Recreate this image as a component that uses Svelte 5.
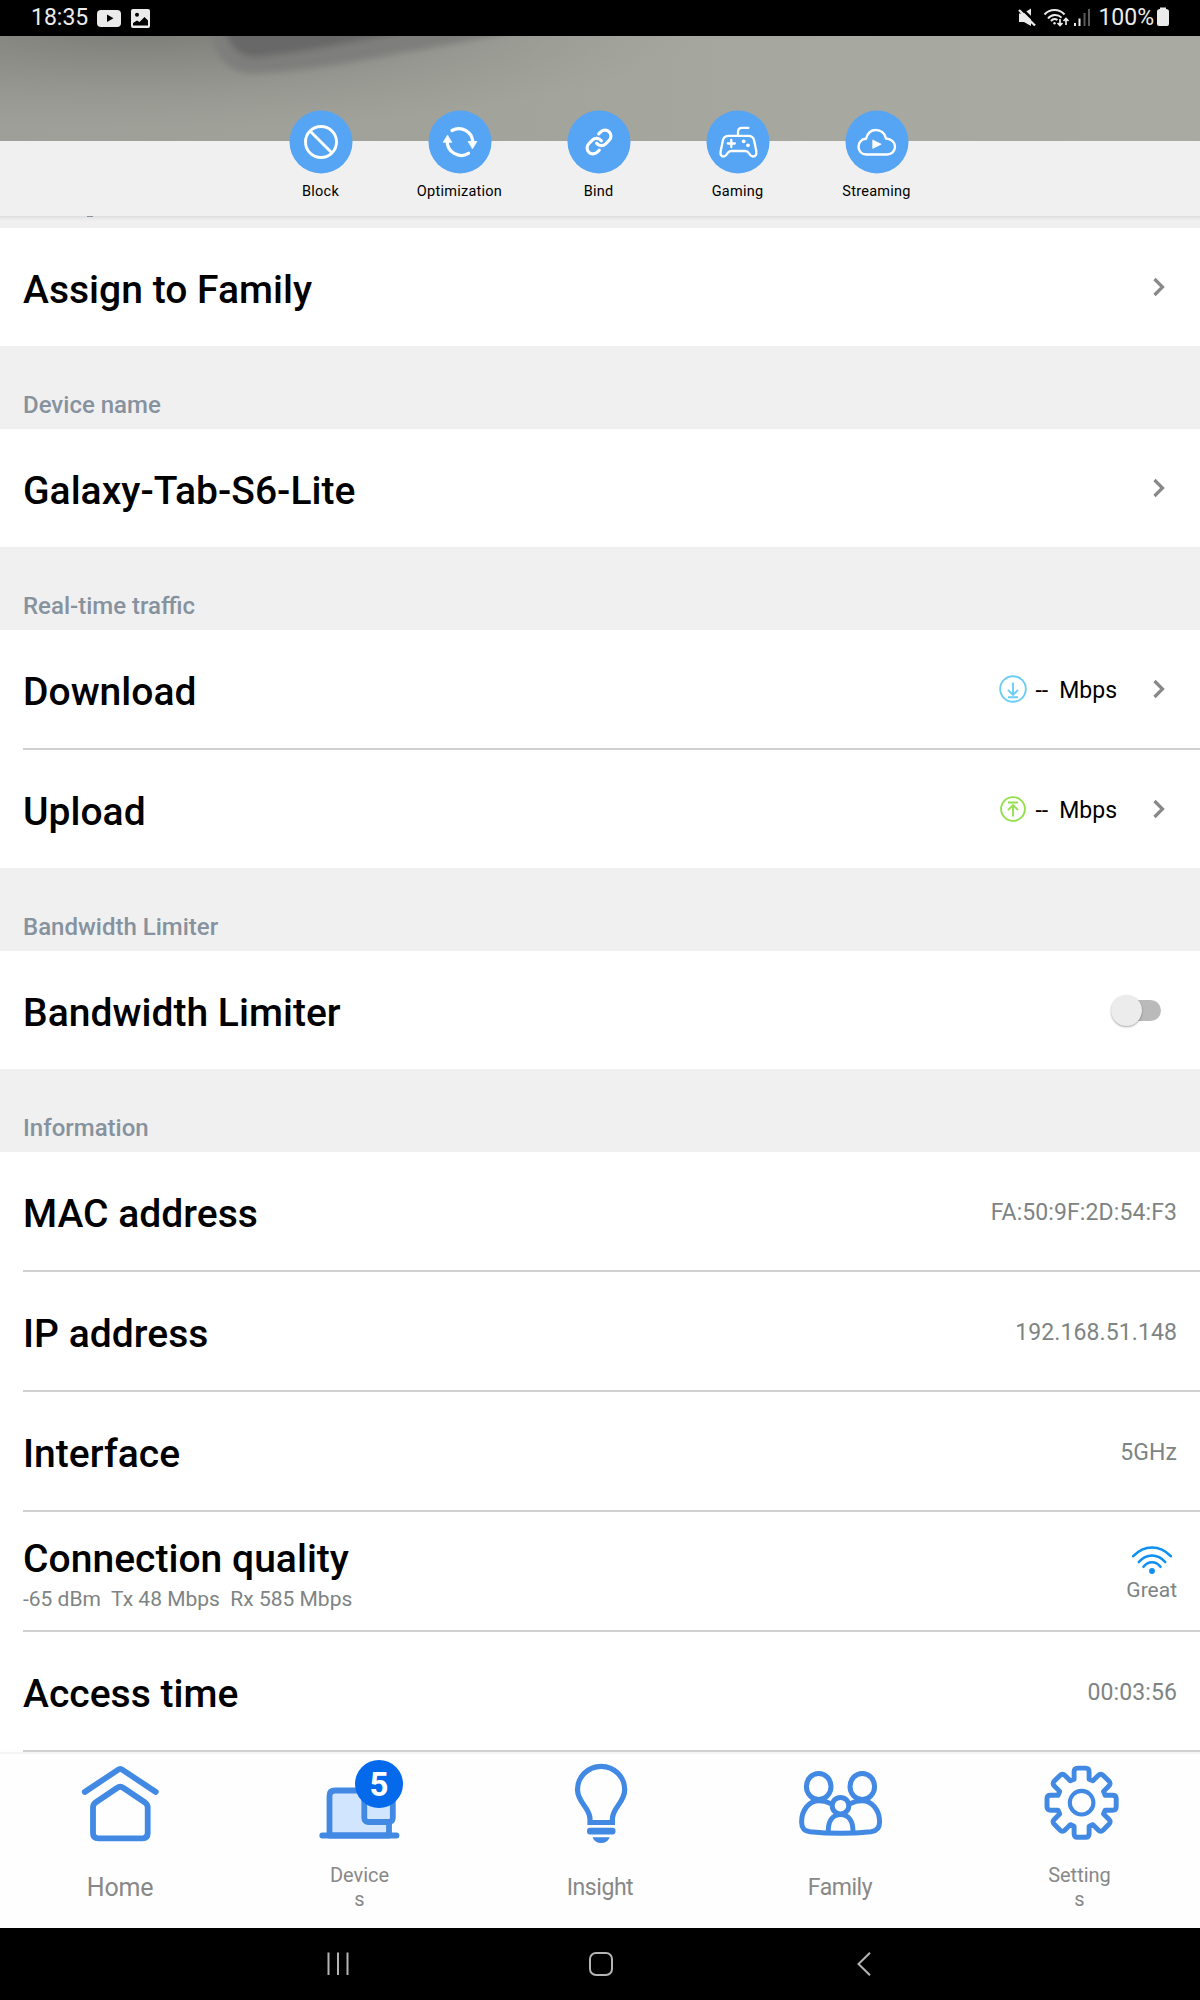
<script>
  const actions = ['Block', 'Optimization', 'Bind', 'Gaming', 'Streaming'];
  const sections = [
    { rows: [{ title: 'Assign to Family', kind: 'link' }] },
    { header: 'Device name', rows: [{ title: 'Galaxy-Tab-S6-Lite', kind: 'link' }] },
    {
      header: 'Real-time traffic',
      rows: [
        { title: 'Download', kind: 'traffic', dir: 'down' },
        { title: 'Upload', kind: 'traffic', dir: 'up' }
      ]
    },
    { header: 'Bandwidth Limiter', rows: [{ title: 'Bandwidth Limiter', kind: 'toggle' }] },
    {
      header: 'Information',
      rows: [
        { title: 'MAC address', kind: 'value', value: 'FA:50:9F:2D:54:F3' },
        { title: 'IP address', kind: 'value', value: '192.168.51.148' },
        { title: 'Interface', kind: 'value', value: '5GHz' },
        {
          title: 'Connection quality',
          kind: 'signal',
          sub: '-65 dBm  Tx 48 Mbps  Rx 585 Mbps',
          value: 'Great'
        },
        { title: 'Access time', kind: 'value', value: '00:03:56' }
      ]
    }
  ];
  const tabs = [
    { name: 'Home', lines: ['Home'], size: 'large' },
    { name: 'Devices', lines: ['Device', 's'], size: 'small', badge: 5 },
    { name: 'Insight', lines: ['Insight'], size: 'medium' },
    { name: 'Family', lines: ['Family'], size: 'medium' },
    { name: 'Settings', lines: ['Setting', 's'], size: 'small' }
  ];

  // Eight-tooth gear outline centred on (cx, cy)
  function gearPath(cx, cy) {
    let d = '';
    for (let i = 0; i < 8; i++) {
      const a = (i * Math.PI) / 4;
      const p = (x, y) =>
        `${(cx + x * Math.cos(a) - y * Math.sin(a)).toFixed(2)} ${(cy + x * Math.sin(a) + y * Math.cos(a)).toFixed(2)}`;
      d += `${i ? 'L' : 'M'}${p(-7.5, -23.5)}L${p(-7.5, -31)}Q${p(-7.5, -34.6)} ${p(-4, -34.6)}L${p(4, -34.6)}Q${p(7.5, -34.6)} ${p(7.5, -31)}L${p(7.5, -23.5)}`;
    }
    return d + 'Z';
  }
  const gear = gearPath(49.6, 46.7);
</script>

<div class="screen">
  <div class="status">
    <span class="clock">18:35</span>
    <svg class="notif" width="56" height="36" viewBox="0 0 56 36">
      <rect x="0" y="10" width="24" height="17" rx="4" fill="#ebebeb" />
      <path d="M10 14.5V22L16.5 18.2Z" fill="#000" />
      <rect x="34" y="9" width="19" height="19" rx="2" fill="#ebebeb" />
      <path d="M36 25.5V23L40 20.5L42.5 22L47.5 17L51 20.5V25.5Z" fill="#000" />
      <circle cx="40" cy="14.7" r="2" fill="#000" />
    </svg>
    <div class="status-right">
      <svg width="76" height="36" viewBox="0 0 76 36" fill="none">
        <path d="M1 13.5H5L13 8.5V26L6 22H1Z" fill="#ebebeb" />
        <path d="M2.5 7.5L19 23.500" stroke="#000" stroke-width="2.500" />
        <path d="M1 10L17 25.5" stroke="#ebebeb" stroke-width="2.4" />
        <g stroke="#ebebeb" stroke-width="2">
          <path d="M26.500 14.500A13.5 13.5 0 0 1 46.500 14.500" />
          <path d="M30 18.500A9 9 0 0 1 43.500 17.600" />
          <path d="M33 21A5 5 0 0 1 39.500 20" />
          <path d="M42 19V25.500M39.500 23L42 25.500L44.500 23M48 25V18.500M45.500 21L48 18.500L50.500 21" stroke-width="1.700" />
        </g>
        <circle cx="36.500" cy="23.300" r="1.200" fill="#ebebeb" />
        <path d="M57 23V26M61.500 18.500V26" stroke="#ebebeb" stroke-width="2" />
        <path d="M66.500 13V26M71 9V26" stroke="#5a5a5a" stroke-width="2" />
      </svg>
      <span class="percent">100%</span>
      <svg width="12" height="36" viewBox="0 0 12 36">
        <path d="M3 9V7.500H9V9Q12 9 12 11.500V24Q12 26 10 26H2Q0 26 0 24V11.500Q0 9 3 9Z" fill="#ebebeb" />
      </svg>
    </div>
  </div>

  <header class="hero">
    <svg class="photo" width="1200" height="105" viewBox="0 0 1200 105" preserveAspectRatio="none">
      <defs>
        <linearGradient id="base" x1="0" x2="1" y1="0" y2="0">
          <stop offset="0" stop-color="#9e9f98" />
          <stop offset=".35" stop-color="#a1a29a" />
          <stop offset=".7" stop-color="#a7a8a0" />
          <stop offset="1" stop-color="#a9aba3" />
        </linearGradient>
        <radialGradient id="shade" gradientUnits="userSpaceOnUse" cx="0" cy="0" r="1" gradientTransform="translate(140 -10) scale(560 105)">
          <stop offset="0" stop-color="#70716c" stop-opacity=".8" />
          <stop offset=".5" stop-color="#7a7b76" stop-opacity=".38" />
          <stop offset="1" stop-color="#8a8b85" stop-opacity="0" />
        </radialGradient>
        <filter id="soft" x="-10%" y="-50%" width="120%" height="200%"><feGaussianBlur stdDeviation="3" /></filter>
      </defs>
      <rect width="1200" height="105" fill="url(#base)" />
      <rect width="1200" height="105" fill="url(#shade)" />
      <g filter="url(#soft)">
        <path d="M208 -12Q216 36 250 37Q300 37 400 17Q490 2 545 -12Z" fill="#7e7e7b" />
        <path d="M222 -12Q232 22 256 21Q310 16 440 -12Z" fill="#686868" />
      </g>
    </svg>
    <div class="actions">
      {#each actions as name}
        <div class="action">
          <svg width="64" height="64" viewBox="-32 -32 64 64" fill="none" stroke="#fff" stroke-linecap="round" stroke-linejoin="round">
            <circle r="31.500" fill="#56a4f4" stroke="none" />
            {#if name === 'Block'}
              <circle r="15.500" stroke-width="2.900" />
              <path d="M-10.500 -10.500L10.500 10.500" stroke-width="2.900" />
            {:else if name === 'Optimization'}
              <path d="M-8 -11.500A14 14 0 0 1 12.800 1M8.500 11.300A14 14 0 0 1 -12.800 -1" stroke-width="3.200" />
              <path d="M8.500 -.500H16.800L12.600 6.500ZM-8.500 .300H-16.800L-12.600 -6.500Z" fill="#fff" stroke-width=".800" />
            {:else if name === 'Bind'}
              <g transform="scale(1.200) translate(-12 -12)" stroke-width="2.600">
                <path d="M10 13a5 5 0 0 0 7.540.540l3-3a5 5 0 0 0-7.070-7.070l-1.720 1.710" />
                <path d="M14 11a5 5 0 0 0-7.540-.540l-3 3a5 5 0 0 0 7.070 7.070l1.710-1.710" />
              </g>
            {:else if name === 'Gaming'}
              <path d="M0 -6.500V-10Q0 -14.200 4 -14.200H10.500M-9 -6.200H10Q15 -6.200 16 -2L18.300 9Q19 14.500 15 14.500Q12.800 14.500 10.800 11Q9.500 9 7 9H-6.500Q-9 9 -10.300 11Q-12.300 14.500 -14.500 14.500Q-18.200 14.500 -17.300 9L-15 -2Q-14 -6.200 -9 -6.200Z" stroke-width="2.300" />
              <path d="M-6.700 -2V5M-10.200 1.500H-3.200" stroke-width="2.300" />
              <circle cx="5.700" cy="-.700" r="1.900" fill="#fff" stroke="none" />
              <circle cx="10" cy="3.300" r="1.900" fill="#fff" stroke="none" />
            {:else}
              <path d="M-10.500 12.500C-15.500 12.500 -18.500 9 -18.500 4.800C-18.500 .500 -15.500 -3 -11 -3.200C-9.500 -9 -6 -12 -1.200 -12C3.800 -12 8 -8.800 9 -3.500C14.500 -3 18 .300 18 4.800C18 9.300 14.500 12.500 10 12.500Z" stroke-width="2.400" />
              <path d="M-4 -1.800L4.200 2.200L-4 6.200Z" fill="#fff" stroke-width=".800" />
            {/if}
          </svg>
          <span>{name}</span>
        </div>
      {/each}
    </div>
  </header>
  <div class="strip"><i class="tail"></i></div>

  {#each sections as section}
    {#if section.header}
      <div class="section-head">{section.header}</div>
    {/if}
    <section>
      {#each section.rows as row}
        <div class="row">
          <div class="titles">
            <span class="title">{row.title}</span>
            {#if row.sub}<span class="sub">{row.sub}</span>{/if}
          </div>
          {#if row.kind === 'value'}
            <span class="value">{row.value}</span>
          {:else if row.kind === 'signal'}
            <div class="signal">
              <svg width="42" height="28" viewBox="0 0 42 28" fill="none" stroke="#0e8ff2" stroke-width="2.600" stroke-linecap="round">
                <path d="M2.200 10.200Q10.500 1.500 21 1.500T39.800 10.200M7.800 16Q13.500 9.500 21 9.500T34.200 16M12.500 20.800Q16 16.200 21 16.200T29.500 20.800" />
                <circle cx="21" cy="25" r="2.900" fill="#0e8ff2" stroke="none" />
              </svg>
              <span>{row.value}</span>
            </div>
          {:else if row.kind === 'toggle'}
            <div class="toggle"><i></i></div>
          {:else}
            {#if row.kind === 'traffic'}
              <svg class="traffic" width="28" height="28" viewBox="-14 -14 28 28" fill="none" stroke-width="1.900">
                {#if row.dir === 'down'}
                  <g stroke="#6ccdf5"><circle r="12.800" /><path d="M0 -6.500V5.500M-5 .800L0 5.800L5 .800M-5 8.300H5" /></g>
                {:else}
                  <g stroke="#94e04c"><circle r="11.900" /><path d="M0 7.500V-3M-5 1.200L0 -3.800L5 1.200M-5 -6.500H5" /></g>
                {/if}
              </svg>
              <span class="dashes">--</span>
              <span class="unit">Mbps</span>
            {/if}
            <svg class="chevron" width="14" height="22" viewBox="0 0 14 22" fill="none" stroke="#888" stroke-width="3.200">
              <path d="M2.500 3L10.500 11L2.500 19" />
            </svg>
          {/if}
        </div>
      {/each}
    </section>
  {/each}

  <nav class="tabs">
    {#each tabs as tab}
      <div class="tab">
        <div class="icon">
          <svg width="96" height="96" viewBox="0 0 96 96" fill="none" stroke="#4189e3" stroke-width="5.800" stroke-linecap="round" stroke-linejoin="round">
            {#if tab.name === 'Home'}
              <path d="M12.700 36L46 13.800Q48.200 12 50.500 13.800L83.800 36" />
              <path d="M21 51.500Q21 48.500 23.500 46.500L45 32Q48.200 29.500 51.500 32L73 46.500Q75.700 48.500 75.700 51.500V77Q75.700 82.300 70.500 82.300H26.500Q21 82.300 21 77Z" />
            {:else if tab.name === 'Devices'}
              <path d="M17.500 79.500V40Q17.500 34.500 23 34.500H72Q77 34.500 77 40V79.500Z" fill="#d2e5ff" />
              <path d="M10.300 79.500H84.500" />
              <rect x="52.300" y="40" width="28.500" height="26" rx="4" fill="#d2e5ff" />
            {:else if tab.name === 'Insight'}
              <path d="M38 66.500V63C38 51 25.500 47 25.500 33.500A23.600 23.200 0 0 1 72.700 33.500C72.700 47 60.400 51 60.400 63V66.500Z" stroke-width="5.200" stroke-linejoin="miter" />
              <rect x="35" y="71.800" width="28.500" height="6.600" rx="3" fill="#4189e3" stroke="none" />
              <path d="M40.500 81.200H57.700Q55.500 87 49.100 87Q42.800 87 40.500 81.200Z" fill="#4189e3" stroke="none" />
            {:else if tab.name === 'Family'}
              <g stroke-width="5">
                <ellipse cx="26.700" cy="30.500" rx="12.300" ry="13" />
                <ellipse cx="70.300" cy="30.500" rx="12.300" ry="13" />
                <circle cx="48.500" cy="49.700" r="8.300" />
                <path d="M38.500 47.500Q33 44.800 27 44.800C17 44.800 9.600 54 9.600 66C9.600 72 12 75 18 75.800C38 77.800 59 77.800 79 75.800C85 75 87.600 72 87.600 66C87.600 54 80 44.800 70 44.800Q64 44.800 58.500 47.500" />
                <path d="M36.200 75.500C36.200 66 40 58.500 48.600 58.500C57.200 58.500 61 66 61 75.500" />
              </g>
            {:else}
              <path d={gear} stroke-width="4.900" />
              <circle cx="49.600" cy="46.700" r="11.800" stroke-width="4.100" />
            {/if}
          </svg>
          {#if tab.badge}<b class="badge">{tab.badge}</b>{/if}
        </div>
        <div class="label {tab.size}">
          {#each tab.lines as line}<span>{line}</span>{/each}
        </div>
      </div>
    {/each}
  </nav>

  <footer class="sysnav">
    <svg width="24" height="24" viewBox="0 0 24 24" stroke="#b4b4b4" stroke-width="2"><path d="M2.500 .500V23M12 .500V23M21.500 .500V23" /></svg>
    <svg width="24" height="24" viewBox="0 0 24 24" fill="none" stroke="#b4b4b4" stroke-width="2"><rect x="1" y="1" width="22" height="22" rx="6" /></svg>
    <svg width="24" height="24" viewBox="0 0 24 24" fill="none" stroke="#b4b4b4" stroke-width="2"><path d="M18 .700L6.500 12L18 23.300" /></svg>
  </footer>
</div>

<style>
  :global(body) {
    margin: 0;
    background: #000;
  }
  .screen {
    width: 1200px;
    height: 2000px;
    display: flex;
    flex-direction: column;
    overflow: hidden;
    background: #f0f0f0;
    font-family: Roboto, 'Liberation Sans', sans-serif;
    color: #000;
  }
  svg {
    display: block;
    flex: none;
  }
  .status {
    height: 36px;
    flex: none;
    display: flex;
    align-items: center;
    background: #000;
    color: #ebebeb;
    font-size: 23px;
    line-height: 36px;
    padding: 0 31px;
  }
  .notif {
    margin-left: 9px;
  }
  .status-right {
    margin-left: auto;
    display: flex;
  }
  .percent {
    margin: 0 3px 0 4px;
  }
  .hero {
    height: 180px;
    flex: none;
    position: relative;
    box-sizing: border-box;
    padding-top: 74px;
  }
  .photo {
    position: absolute;
    top: 0;
    left: 0;
  }
  .actions {
    position: relative;
    display: flex;
    width: 695px;
    margin-left: 251px;
  }
  .action {
    width: 139px;
    display: flex;
    flex-direction: column;
    align-items: center;
    font-size: 14.500px;
    letter-spacing: 0.250px;
    line-height: 18px;
  }
  .action span {
    margin-top: 9px;
  }
  .strip {
    height: 12px;
    flex: none;
    background: linear-gradient(#dcdcdc, #e8e8e8 2px, #f0f0f0 5px);
  }
  .tail {
    display: block;
    width: 6px;
    height: 1px;
    margin-left: 87px;
    background: #86929e;
  }
  .section-head {
    height: 83px;
    flex: none;
    box-sizing: border-box;
    padding: 45px 23px 0;
    font-size: 24px;
    line-height: 28px;
    font-weight: 500;
    color: #86929e;
  }
  section {
    background: #fff;
    flex: none;
  }
  .row {
    height: 118px;
    display: flex;
    align-items: center;
    margin-left: 23px;
    padding-right: 23px;
  }
  .row + .row {
    border-top: 2px solid #d0d0d0;
  }
  .titles {
    display: flex;
    flex-direction: column;
    margin-right: auto;
    padding-top: 5px;
  }
  .title {
    font-size: 39px;
    line-height: 46px;
    font-weight: 500;
    letter-spacing: 0.030px;
  }
  .sub {
    font-size: 21px;
    line-height: 25px;
    margin-top: 5px;
    white-space: pre;
    color: #7e8483;
  }
  .value {
    font-size: 23px;
    letter-spacing: 0.100px;
    padding-top: 2px;
    color: #7e8483;
  }
  .signal {
    display: flex;
    flex-direction: column;
    align-items: center;
    padding-top: 6px;
    font-size: 21px;
    line-height: 25px;
    color: #7e8483;
  }
  .signal span {
    margin-top: 4px;
  }
  .traffic {
    margin-right: 9px;
  }
  .dashes,
  .unit {
    font-size: 23px;
    line-height: 28px;
    padding-top: 3px;
  }
  .unit {
    margin: 0 35px 0 11px;
  }
  .chevron {
    margin-right: 11px;
  }
  .toggle {
    position: relative;
    width: 44px;
    height: 21px;
    border-radius: 11px;
    background: #bababa;
    margin-right: 16px;
  }
  .toggle i {
    position: absolute;
    left: -6px;
    top: -5px;
    width: 31px;
    height: 31px;
    border-radius: 50%;
    background: #ececec;
    box-shadow: 0 1px 2px rgba(0, 0, 0, 0.35);
  }
  .tabs {
    height: 178px;
    flex: none;
    box-sizing: border-box;
    display: flex;
    background: linear-gradient(#d0d0d0, #d0d0d0) 23px 0 / 100% 2px no-repeat,
      linear-gradient(#f4f4f4, #f4f4f4) 0 2px / 100% 2px no-repeat, #fefefe;
    padding-top: 6px;
  }
  .tab {
    width: 240px;
    display: flex;
    flex-direction: column;
    align-items: center;
  }
  .icon {
    position: relative;
  }
  .badge {
    position: absolute;
    left: 43px;
    top: 4px;
    width: 48px;
    height: 48px;
    border-radius: 50%;
    background: #046aeb;
    color: #fff;
    font-size: 33px;
    line-height: 50px;
    text-align: center;
  }
  .label {
    height: 72px;
    display: flex;
    flex-direction: column;
    justify-content: center;
    align-items: center;
    color: #888;
    line-height: 24px;
  }
  .label span {
    display: block;
  }
  .large {
    font-size: 25px;
    letter-spacing: -0.200px;
  }
  .medium {
    font-size: 23px;
    letter-spacing: -0.450px;
  }
  .small {
    height: 70px;
    font-size: 20px;
    padding-right: 1px;
  }
  .sysnav {
    flex: 1;
    display: flex;
    align-items: center;
    justify-content: center;
    gap: 239px;
    padding-left: 1px;
    background: #000;
  }
</style>
